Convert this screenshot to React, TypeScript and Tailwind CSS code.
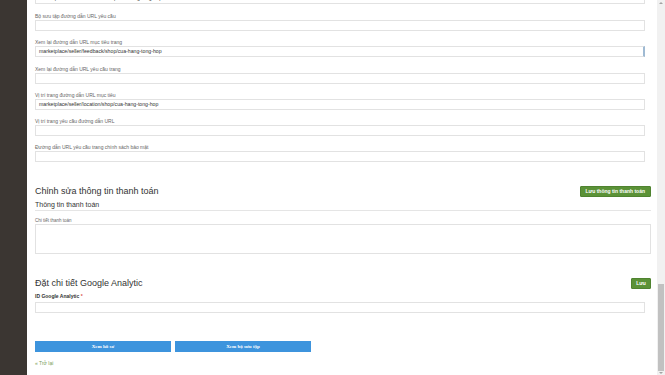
const fields = [
  { label: 'Bộ sưu tập đường dẫn URL yêu cầu', value: '' },
  { label: 'Xem lại đường dẫn URL mục tiêu trang', value: 'marketplace/seller/feedback/shop/cua-hang-tong-hop', focus: true },
  { label: 'Xem lại đường dẫn URL yêu cầu trang', value: '' },
  { label: 'Vị trí trang đường dẫn URL mục tiêu', value: 'marketplace/seller/location/shop/cua-hang-tong-hop' },
  { label: 'Vị trí trang yêu cầu đường dẫn URL', value: '' },
  { label: 'Đường dẫn URL yêu cầu trang chính sách bảo mật', value: '' },
]

function Field({ label, value, focus }: { label: string; value: string; focus?: boolean }) {
  return (
    <div className="mb-[8.3px]">
      <div className="h-[7px] text-[5px] leading-[7px] text-[#666]">{label}</div>
      <div
        className={`mr-[6px] h-[11px] border border-[#e2e2e2] bg-white px-[3px] text-[5.2px] leading-[9px] text-[#333] ${focus ? 'border-r-[#9fbad3] border-r-2' : ''}`}
      >
        {value}
      </div>
    </div>
  )
}

export default function App() {
  return (
    <div className="flex h-[375px] w-[665px] overflow-hidden bg-white font-['Liberation_Sans',Arial,sans-serif]">
      <div className="w-[27px] shrink-0 bg-[#3b3632]" />

      <div className="flex-1 overflow-hidden pl-[8px] pr-[6px]">
        {/* partially scrolled input */}
        <div className="mr-[6px] mt-[-7px] h-[11px] border border-[#e2e2e2] px-[3px] text-[5.2px] leading-[9px] text-[#333]">
          marketplace/seller/collection/shop/cua-hang-tong-hop
        </div>
        <div className="mt-[9px]">
          {fields.map(f => (
            <Field key={f.label} {...f} />
          ))}
        </div>

        {/* Payment */}
        <div className="mt-[22px] flex h-[15px] items-center justify-between">
          <h2 className="text-[9px] leading-[15px] text-[#333]">Chỉnh sửa thông tin thanh toán</h2>
          <button className="h-[11px] rounded-[1px] border border-[#4f8330] bg-[#5b9237] px-[5px] text-[5px] font-bold leading-[9px] text-white">
            Lưu thông tin thanh toán
          </button>
        </div>
        <div className="mt-[1px] h-[11px] border-b border-[#e5e5e5] text-[7px] leading-[10px] text-[#333]">Thông tin thanh toán</div>
        <div className="mt-[6px] h-[7px] text-[4.5px] leading-[7px] text-[#666]">Chi tiết thanh toán</div>
        <div className="h-[30px] border border-[#e2e2e2] bg-white" />

        {/* Google Analytic */}
        <div className="mt-[22px] flex h-[15px] items-center justify-between">
          <h2 className="text-[9px] leading-[15px] text-[#333]">Đặt chi tiết Google Analytic</h2>
          <button className="h-[11px] w-[20px] rounded-[1px] border border-[#4f8330] bg-[#5b9237] text-[5px] font-bold leading-[9px] text-white">
            Lưu
          </button>
        </div>
        <div className="mt-[2px] h-[7px] text-[5px] font-bold leading-[7px] text-[#333]">
          ID Google Analytic <span className="text-[#d9534f]">*</span>
        </div>
        <div className="mr-[6px] mt-[2px] h-[11px] border border-[#e2e2e2] bg-white" />

        <div className="mt-[28px] flex gap-[4px]">
          <button className="h-[11px] w-[136px] bg-[#3d94dd] font-['Liberation_Serif',serif] text-[5px] font-bold leading-[11px] text-white">
            Xem hồ sơ
          </button>
          <button className="h-[11px] w-[136px] bg-[#3d94dd] font-['Liberation_Serif',serif] text-[5px] font-bold leading-[11px] text-white">
            Xem bộ sưu tập
          </button>
        </div>
        <div className="mt-[7px] text-[5px] leading-[8px] text-[#7aa05a]">« Trở lại</div>
      </div>

      {/* scrollbar */}
      <div className="flex w-[8px] shrink-0 flex-col items-center bg-[#f1f1f1]">
        <div className="mt-[2px] h-0 w-0 border-x-[2px] border-b-[2px] border-x-transparent border-b-[#a3a3a3]" />
        <div className="flex-1" />
        <div className="h-[87px] w-[6px] bg-[#c1c1c1]" />
        <div className="my-[1px] h-0 w-0 border-x-[2px] border-t-[2px] border-x-transparent border-t-[#a3a3a3]" />
      </div>
    </div>
  )
}
